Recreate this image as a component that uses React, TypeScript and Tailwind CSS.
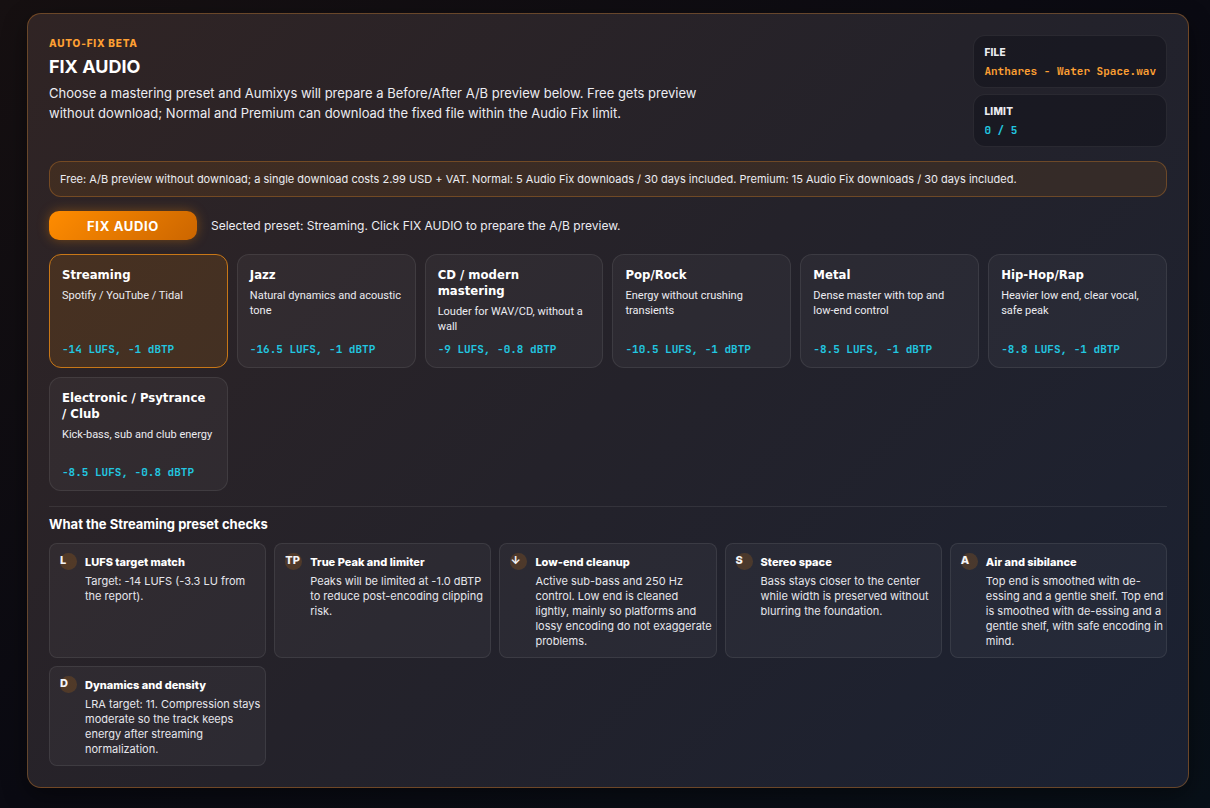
import { useState } from 'react'
import clsx from 'clsx'

type Preset = { name: string; note: string; target: string }
type Check = { mark: string; title: string; text: string }

const presets: Preset[] = [
  { name: 'Streaming', note: 'Spotify / YouTube / Tidal', target: '-14 LUFS, -1 dBTP' },
  { name: 'Jazz', note: 'Natural dynamics and acoustic tone', target: '-16.5 LUFS, -1 dBTP' },
  { name: 'CD / modern mastering', note: 'Louder for WAV/CD, without a wall', target: '-9 LUFS, -0.8 dBTP' },
  { name: 'Pop/Rock', note: 'Energy without crushing transients', target: '-10.5 LUFS, -1 dBTP' },
  { name: 'Metal', note: 'Dense master with top and low-end control', target: '-8.5 LUFS, -1 dBTP' },
  { name: 'Hip-Hop/Rap', note: 'Heavier low end, clear vocal, safe peak', target: '-8.8 LUFS, -1 dBTP' },
  { name: 'Electronic / Psytrance / Club', note: 'Kick-bass, sub and club energy', target: '-8.5 LUFS, -0.8 dBTP' },
]

const checks: Check[] = [
  { mark: 'L', title: 'LUFS target match', text: 'Target: -14 LUFS (-3.3 LU from the report).' },
  {
    mark: 'TP',
    title: 'True Peak and limiter',
    text: 'Peaks will be limited at -1.0 dBTP to reduce post-encoding clipping risk.',
  },
  {
    mark: '↓',
    title: 'Low-end cleanup',
    text: 'Active sub-bass and 250 Hz control. Low end is cleaned lightly, mainly so platforms and lossy encoding do not exaggerate problems.',
  },
  {
    mark: 'S',
    title: 'Stereo space',
    text: 'Bass stays closer to the center while width is preserved without blurring the foundation.',
  },
  {
    mark: 'A',
    title: 'Air and sibilance',
    text: 'Top end is smoothed with de-essing and a gentle shelf. Top end is smoothed with de-essing and a gentle shelf, with safe encoding in mind.',
  },
  {
    mark: 'D',
    title: 'Dynamics and density',
    text: 'LRA target: 11. Compression stays moderate so the track keeps energy after streaming normalization.',
  },
]

/** Small label/value box on the right of the header. */
function InfoBox({ label, value, valueClass }: { label: string; value: string; valueClass: string }) {
  return (
    <div className="rounded-xl border border-white/7 bg-[#0a0a12]/35 px-[10px] py-2">
      <dt className="text-[10px] leading-4 font-extrabold tracking-wide text-[#ececf1]">{label}</dt>
      <dd
        className={clsx(
          "mt-[3px] font-['JetBrains_Mono','DejaVu_Sans_Mono',monospace] text-[11px] leading-4 font-bold",
          valueClass,
        )}
      >
        {value}
      </dd>
    </div>
  )
}

function PresetCard({ preset, active, onSelect }: { preset: Preset; active: boolean; onSelect: () => void }) {
  return (
    <button
      type="button"
      aria-pressed={active}
      onClick={onSelect}
      className={clsx(
        'flex min-h-[114px] cursor-pointer flex-col rounded-xl border p-3 text-left',
        active ? 'border-[#c87717] bg-[#ff8c00]/12' : 'border-white/8 bg-white/4',
      )}
    >
      <span className="pr-[6px] font-['DejaVu_Sans_Condensed','DejaVu_Sans',sans-serif] text-[13px] leading-4 font-bold text-white">
        {preset.name}
      </span>
      <span className="mt-[5px] font-[Roboto,sans-serif] text-[11px] leading-[15px] text-[#ececf1]">{preset.note}</span>
      <span className="mt-auto font-['JetBrains_Mono','DejaVu_Sans_Mono',monospace] text-[11px] leading-3 font-bold text-[#22c7e0]">
        {preset.target}
      </span>
    </button>
  )
}

function CheckCard({ check }: { check: Check }) {
  return (
    <li className="flex gap-2 rounded-lg border border-white/8 bg-white/4 pt-[9px] pr-[2px] pb-2 pl-[10px]">
      <span className="size-[17px] shrink-0 rounded-full bg-[#ff8c00]/16 text-[11px] leading-[15px] font-extrabold text-[#f4f4f7]">
        {check.mark}
      </span>
      <div className="min-w-0">
        <h4 className="text-[11px] leading-[19px] font-extrabold text-white">{check.title}</h4>
        <p className="mt-[2px] text-[11px] leading-[15px] text-[#e6e6ec]">{check.text}</p>
      </div>
    </li>
  )
}

export default function App() {
  const [selected, setSelected] = useState(presets[0].name)

  return (
    <main className="min-h-screen bg-linear-to-br from-[#161011] via-[#0a0a12] to-[#081018] pt-[13px] pr-[21px] pb-5 pl-[27px] font-[Inter,sans-serif]">
      <section className="rounded-[14px] border border-[#ff9628]/32 bg-linear-135 from-[#302424] via-[#24222a] to-[#1a2132] p-[21px] shadow-[0_8px_24px_rgba(0,0,0,0.4)]">
        <header className="flex items-start justify-between gap-4">
          <div className="max-w-[660px]">
            <p className="text-[10px] leading-4 font-extrabold tracking-[0.08em] text-[#ffa033]">AUTO-FIX BETA</p>
            <h2 className="mt-1 text-[18px] leading-6 font-bold text-white">FIX AUDIO</h2>
            <p className="mt-1 text-[13px] leading-5 text-[#ececf1]">
              Choose a mastering preset and Aumixys will prepare a Before/After A/B preview below. Free gets preview
              without download; Normal and Premium can download the fixed file within the Audio Fix limit.
            </p>
          </div>
          <dl className="flex min-w-[192px] flex-col gap-[6px]">
            <InfoBox label="FILE" value="Anthares - Water Space.wav" valueClass="text-[#ffa033]" />
            <InfoBox label="LIMIT" value="0 / 5" valueClass="text-[#22c7e0]" />
          </dl>
        </header>

        <p className="mt-[14px] rounded-xl border border-[#ff9628]/28 bg-[#ff8c00]/9 px-[10px] py-2 text-[11px] leading-[18px] text-[#ececf1]">
          Free: A/B preview without download; a single download costs 2.99 USD + VAT. Normal: 5 Audio Fix downloads / 30
          days included. Premium: 15 Audio Fix downloads / 30 days included.
        </p>

        <div className="mt-[14px] flex flex-wrap items-center gap-[14px]">
          <button
            type="button"
            className="h-[29px] w-[148px] cursor-pointer rounded-[10px] bg-linear-135 from-[#ff8c00] to-[#cc6600] text-[13px] leading-5 font-bold tracking-wider text-white shadow-[0_0_12px_rgba(255,140,0,0.35)]"
          >
            FIX AUDIO
          </button>
          <p className="text-[12px] leading-[18px] text-[#ececf1]">
            Selected preset: {selected}. Click FIX AUDIO to prepare the A/B preview.
          </p>
        </div>

        <div className="mt-[14px] grid grid-cols-[repeat(auto-fill,minmax(170px,1fr))] gap-[9px]">
          {presets.map((preset) => (
            <PresetCard
              key={preset.name}
              preset={preset}
              active={preset.name === selected}
              onSelect={() => setSelected(preset.name)}
            />
          ))}
        </div>

        <div className="mt-[15px] border-t border-white/8 pt-[7px]">
          <h3 className="text-[13px] leading-5 font-bold text-white">What the {selected} preset checks</h3>
          <ul className="mt-[9px] grid grid-cols-[repeat(auto-fill,minmax(210px,1fr))] gap-2">
            {checks.map((check) => (
              <CheckCard key={check.title} check={check} />
            ))}
          </ul>
        </div>
      </section>
    </main>
  )
}
